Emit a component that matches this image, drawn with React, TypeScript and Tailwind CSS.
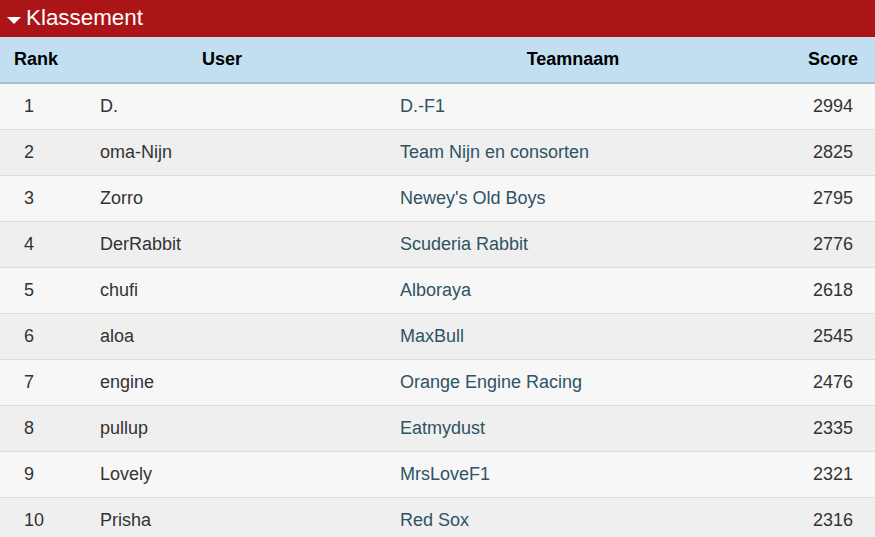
const rows = [
  { rank: 1, user: "D.", team: "D.-F1", score: 2994 },
  { rank: 2, user: "oma-Nijn", team: "Team Nijn en consorten", score: 2825 },
  { rank: 3, user: "Zorro", team: "Newey's Old Boys", score: 2795 },
  { rank: 4, user: "DerRabbit", team: "Scuderia Rabbit", score: 2776 },
  { rank: 5, user: "chufi", team: "Alboraya", score: 2618 },
  { rank: 6, user: "aloa", team: "MaxBull", score: 2545 },
  { rank: 7, user: "engine", team: "Orange Engine Racing", score: 2476 },
  { rank: 8, user: "pullup", team: "Eatmydust", score: 2335 },
  { rank: 9, user: "Lovely", team: "MrsLoveF1", score: 2321 },
  { rank: 10, user: "Prisha", team: "Red Sox", score: 2316 },
];

const cols = "grid grid-cols-[86px_300px_374px_115px]";

const App = () => {
  return (
    <div className="w-[875px] h-[537px] overflow-hidden bg-white font-['Liberation_Sans',Arial,sans-serif]">
      <div className="flex h-[37px] items-center bg-[#ab1518] pl-[7px] text-white">
        <svg width="14" height="7" viewBox="0 0 14 7" className="mr-[5px] mt-[3px]">
          <path d="M0 0h14L7 7z" fill="white" />
        </svg>
        <span className="text-[22.4px] leading-none">Klassement</span>
      </div>

      <div className={`${cols} h-[47px] items-center border-b-2 border-[#a9bfcc] bg-[#c1dff0] text-[18px] font-bold text-black`}>
        <div className="pl-[14px]">Rank</div>
        <div className="pr-[28px] text-center">User</div>
        <div className="text-center">Teamnaam</div>
        <div className="pr-[17px] text-right">Score</div>
      </div>

      {rows.map((r, i) => (
        <div
          key={r.rank}
          className={`${cols} h-[46px] items-center border-b border-[#dcdcdc] text-[18px] ${
            i % 2 === 0 ? "bg-[#f7f7f7]" : "bg-[#efefef]"
          }`}
        >
          <div className="pl-[24px] text-[#333]">{r.rank}</div>
          <div className="pl-[14px] text-[#333]">{r.user}</div>
          <div className="pl-[14px] text-[#2e5364]">{r.team}</div>
          <div className="pr-[22px] text-right text-[#333]">{r.score}</div>
        </div>
      ))}
    </div>
  );
};

export default App;
